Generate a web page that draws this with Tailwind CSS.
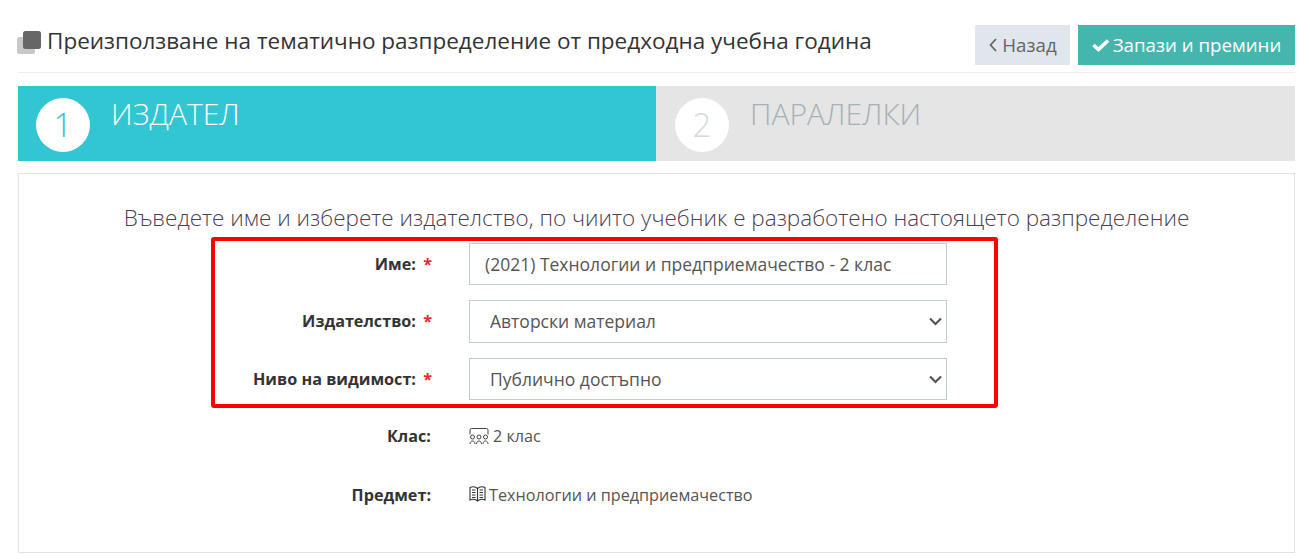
<!DOCTYPE html>
<html lang="bg">
  <head>
    <meta charset="utf-8">
    <script src="https://cdn.jsdelivr.net/npm/@tailwindcss/browser@4"></script>
  </head>
  <body class="bg-white font-['Open_Sans',sans-serif] text-[#333] overflow-hidden">
    <div class="relative h-[559px] pl-[18px] pr-[15px]">

      <!-- header -->
      <div class="flex justify-between h-[73px] pt-[25px] border-b border-[#eeeeee]">
        <h1 class="flex items-start text-[22.5px] leading-[31px] font-normal text-[#333] -ml-px">
          <svg class="w-[24px] h-[24px] mt-[5px] mr-[6px]" viewBox="0 0 24 24">
            <rect x="0" y="7" width="18" height="17" rx="2.5" fill="#c8c8c8"/>
            <rect x="6" y="1" width="18" height="18" rx="2.5" fill="#666666"/>
          </svg>
          Преизползване на тематично разпределение от предходна учебна година
        </h1>
        <div class="flex gap-2 h-10">
          <button class="flex items-center justify-center w-[95px] bg-[#e1e5ec] text-[#666] text-[18.7px]">
            <svg class="w-[10px] h-[16px] mr-[4px]" viewBox="0 0 10 16" fill="none" stroke="#666" stroke-width="1.8"><path d="M8 2 2.5 8 8 14"/></svg>
            Назад
          </button>
          <button class="flex items-center justify-center w-[217px] bg-[#44b6ae] text-white text-[18.7px]">
            <svg class="w-[18px] h-[14px] mr-[3px]" viewBox="0 0 18 14" fill="none" stroke="#fff" stroke-width="3.6"><path d="M1.5 7 6.5 11.5 16 2.5"/></svg>
            Запази и премини
          </button>
        </div>
      </div>

      <!-- steps -->
      <div class="grid grid-cols-[638px_1fr] h-[75px] mt-[13px]">
        <div class="flex bg-[#32c5d2] text-white pl-[18px] pt-3">
          <div class="flex items-center justify-center w-[54px] h-[54px] rounded-full bg-white text-[#32c5d2] text-[33px] font-light">1</div>
          <div class="ml-[21px] -mt-[4px] text-[30px] leading-[40px] font-light">ИЗДАТЕЛ</div>
        </div>
        <div class="flex bg-[#e5e5e5] text-[#a6b0b8] pl-[19px] pt-3">
          <div class="flex items-center justify-center w-[54px] h-[54px] rounded-full bg-white text-[#d5dadd] text-[33px] font-light">2</div>
          <div class="ml-[21px] -mt-[4px] text-[30px] leading-[40px] font-light">ПАРАЛЕЛКИ</div>
        </div>
      </div>

      <!-- form panel -->
      <div class="h-[380px] mt-3 border border-[#e2e2e2] pt-[29px]">
        <p class="text-center text-[22.5px] leading-[30px] font-light text-[#4b3f55]">Въведете име и изберете издателство, по чиито учебник е разработено настоящето разпределение</p>

        <div class="flex items-center h-[42px] mt-[10px]">
          <label class="w-[413px] text-right text-[16.2px] font-bold">Име: <span class="text-[#e7282e] ml-[3px]">*</span></label>
          <input class="w-[478px] h-[42px] ml-[37px] px-[15px] border border-[#c2cad8] text-[#555] text-[17.5px]" type="text" value="(2021) Технологии и предприемачество - 2 клас">
        </div>
        <div class="flex items-center h-[43px] mt-[15px]">
          <label class="w-[413px] text-right text-[16.2px] font-bold">Издателство: <span class="text-[#e7282e] ml-[3px]">*</span></label>
          <div class="relative ml-[37px]">
            <select class="block appearance-none w-[478px] h-[43px] pl-5 pr-8 border border-[#c2cad8] bg-white text-[#555] text-[17.5px]"><option>Авторски материал</option></select>
            <svg class="absolute right-[5px] top-[17px] w-[13px] h-[9px] pointer-events-none" viewBox="0 0 13 9" fill="none" stroke="#555" stroke-width="2.2"><path d="M1 1.5 6.5 7 12 1.5"/></svg>
          </div>
        </div>
        <div class="flex items-center h-[42px] mt-[15px]">
          <label class="w-[413px] text-right text-[16.2px] font-bold">Ниво на видимост: <span class="text-[#e7282e] ml-[3px]">*</span></label>
          <div class="relative ml-[37px]">
            <select class="block appearance-none w-[478px] h-[42px] pl-5 pr-8 border border-[#c2cad8] bg-white text-[#555] text-[17.5px]"><option>Публично достъпно</option></select>
            <svg class="absolute right-[5px] top-[17px] w-[13px] h-[9px] pointer-events-none" viewBox="0 0 13 9" fill="none" stroke="#555" stroke-width="2.2"><path d="M1 1.5 6.5 7 12 1.5"/></svg>
          </div>
        </div>

        <div class="flex items-center h-5 mt-[26px]">
          <label class="w-[412px] text-right text-[16.2px] font-bold">Клас:</label>
          <div class="flex items-center ml-[38px] text-[16.2px] text-[#555]">
            <svg class="w-[20px] h-[16px] mr-[4px]" viewBox="0 0 20 16" fill="none" stroke="#444" stroke-width="1">
              <path d="M1 6.5V2a1.5 1.5 0 0 1 1.5-1.5h15A1.5 1.5 0 0 1 19 2v4.5"/>
              <circle cx="3.5" cy="9" r="2"/><circle cx="10" cy="9" r="2"/><circle cx="16.5" cy="9" r="2"/>
              <path d="M1 16c0-4 5-4 5 0M7.5 16c0-4 5-4 5 0M14 16c0-4 5-4 5 0"/>
            </svg>
            2 клас
          </div>
        </div>
        <div class="flex items-center h-5 mt-[39px]">
          <label class="w-[412px] text-right text-[16.2px] font-bold">Предмет:</label>
          <div class="flex items-center ml-[38px] text-[16.2px] text-[#555]">
            <svg class="w-[17px] h-[16px] mr-[3px] -mt-[2px]" viewBox="0 0 17 16" fill="none" stroke="#333" stroke-width="1.1">
              <path d="M1 1.5C3.5 0.5 6.5 0.5 8.5 2.5 10.5 0.5 13.5 0.5 16 1.5V14C13.5 13 10.5 13 8.5 15 6.5 13 3.5 13 1 14Z"/>
              <path d="M8.5 2.5V15M3 4h3.5M3 6.5h3.5M3 9h3.5M3 11.5h3.5M10.5 4H14M10.5 6.5H14M10.5 9H14M10.5 11.5H14"/>
            </svg>
            Технологии и предприемачество
          </div>
        </div>
      </div>

      <!-- red annotation frame -->
      <div class="absolute left-[211px] top-[237px] w-[787px] h-[171px] border-4 border-[#ff0000] rounded-[3px] pointer-events-none"></div>
    </div>
  </body>
</html>
